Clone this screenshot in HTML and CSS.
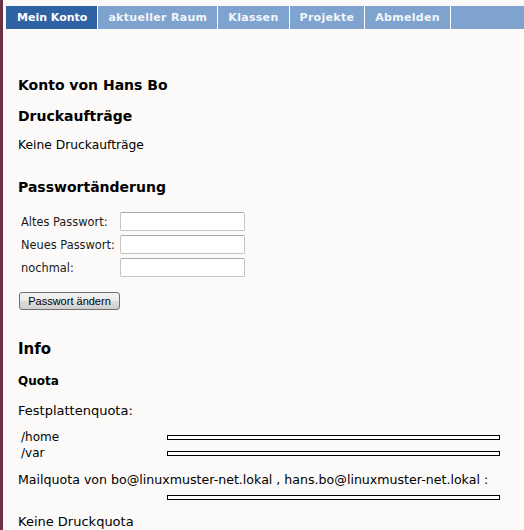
FILE: index.html
```html
<!DOCTYPE html>
<html lang="de">
<head>
<meta charset="utf-8">
<title>Mein Konto</title>
<link rel="stylesheet" href="styles.css">
</head>
<body>
<nav class="nav">
  <a class="tab active">Mein Konto</a>
  <a class="tab">aktueller Raum</a>
  <a class="tab">Klassen</a>
  <a class="tab">Projekte</a>
  <a class="tab">Abmelden</a>
</nav>
<main class="content">
  <h2 class="h-konto">Konto von Hans Bo</h2>
  <h3 class="h-druck">Druckaufträge</h3>
  <p class="p-none">Keine Druckaufträge</p>
  <h3 class="h-pw">Passwortänderung</h3>
  <div class="form">
    <label class="lbl">Altes Passwort:</label><span class="inp"></span>
    <label class="lbl">Neues Passwort:</label><span class="inp"></span>
    <label class="lbl">nochmal:</label><span class="inp"></span>
  </div>
  <button class="btn">Passwort ändern</button>
  <h2 class="h-info">Info</h2>
  <h4 class="h-quota">Quota</h4>
  <p class="p-fest">Festplattenquota:</p>
  <div class="quota">
    <span class="qlbl">/home</span><span class="bar"></span>
    <span class="qlbl">/var</span><span class="bar"></span>
  </div>
  <p class="p-mail">Mailquota von bo@linuxmuster-net.lokal , hans.bo@linuxmuster-net.lokal :</p>
  <div class="quota mailq">
    <span class="qlbl"></span><span class="bar"></span>
  </div>
  <p class="p-druckq">Keine Druckquota</p>
</main>
</body>
</html>
```
FILE: styles.css
```css
html, body {
  margin: 0;
  padding: 0;
  background: #fbfaf9;
}
body {
  border-left: 3px solid #6a3045;
  min-height: 530px;
  box-sizing: border-box;
  font-family: "DejaVu Sans", Verdana, sans-serif;
  color: #000;
}
.nav {
  display: flex;
  margin: 6px 0 0 3px;
  height: 23px;
  background: #7fa3cf;
}
.tab {
  display: block;
  padding: 0 10px;
  line-height: 23px;
  font-size: 11px;
  font-weight: bold;
  letter-spacing: 0.3px;
  color: #f2f5fa;
  border-right: 1px solid #ffffff;
}
.tab.active {
  background: #2f62a3;
  color: #ffffff;
  letter-spacing: 0;
  padding-left: 11px;
}
.content {
  padding-left: 15px;
}
h2, h3, h4, p {
  margin: 0;
}
.h-konto {
  margin-top: 46px;
  font-size: 14px;
  line-height: 20px;
}
.h-druck {
  margin-top: 11px;
  font-size: 14px;
  line-height: 20px;
}
.p-none {
  margin-top: 11px;
  font-size: 12.3px;
  line-height: 16px;
}
.h-pw {
  margin-top: 24px;
  font-size: 14px;
  line-height: 20px;
}
.form {
  margin-top: 13px;
  padding-left: 3px;
  display: grid;
  grid-template-columns: 99px 125px;
  grid-auto-rows: 23px;
  align-items: center;
}
.lbl {
  font-size: 11.4px;
  color: #1a1a1a;
}
.inp {
  height: 17px;
  background: #fff;
  border: 1px solid #c4c4c4;
  border-top-color: #a9a9a9;
  border-radius: 2px;
}
.btn {
  display: block;
  margin: 13px 0 0 1px;
  width: 101px;
  height: 18px;
  padding: 0;
  font-family: "Liberation Sans", Arial, sans-serif;
  font-size: 11px;
  color: #000;
  border: 1px solid #707070;
  border-radius: 3px;
  background: linear-gradient(#f2f2f2 0%, #ebebeb 50%, #dddddd 51%, #cfcfcf 100%);
}
.h-info {
  margin-top: 29px;
  font-size: 15px;
  line-height: 20px;
}
.h-quota {
  margin-top: 13px;
  font-size: 12px;
  line-height: 18px;
}
.p-fest {
  margin-top: 12px;
  font-size: 13px;
  line-height: 18px;
}
.quota {
  margin-top: 9px;
  padding-left: 3px;
  display: grid;
  grid-template-columns: 146px 333px;
  grid-auto-rows: 16px;
  align-items: center;
}
.qlbl {
  font-size: 12px;
}
.bar {
  height: 3px;
  border: 1px solid #000;
  background: #fff;
}
.p-mail {
  margin-top: 10px;
  font-size: 12.6px;
  line-height: 18px;
}
.mailq {
  margin-top: 0;
}
.p-druckq {
  margin-top: 8px;
  font-size: 13px;
  line-height: 18px;
}
```
